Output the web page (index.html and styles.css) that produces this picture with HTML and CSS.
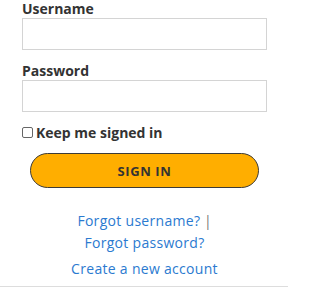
FILE: index.html
```html
<!DOCTYPE html>
<html>
<head>
<meta charset="utf-8">
<link rel="stylesheet" href="styles.css">
</head>
<body>
<form class="login">
  <label class="label" for="u">Username</label>
  <input class="field" id="u" type="text">
  <label class="label second" for="p">Password</label>
  <input class="field" id="p" type="password">
  <label class="remember"><span class="box"></span>Keep me signed in</label>
  <button class="signin" type="button">SIGN IN</button>
  <div class="links">
    <p class="line"><a href="#">Forgot username?</a> <span class="sep">|</span></p>
    <p class="line"><a href="#">Forgot password?</a></p>
    <p class="line create"><a href="#">Create a new account</a></p>
  </div>
</form>
</body>
</html>
```
FILE: styles.css
```css
html, body {
  margin: 0;
  padding: 0;
  background: #fff;
}
body {
  font-family: "Open Sans", "Liberation Sans", sans-serif;
  color: #333;
  width: 288px;
  height: 288px;
  overflow: hidden;
}
.login {
  display: flex;
  flex-direction: column;
  width: 288px;
  padding: 0 21px 0 22px;
  border-bottom: 1px solid #ddd;
  height: 287px;
  box-sizing: border-box;
}
.label {
  font-weight: 700;
  font-size: 14px;
  line-height: 17px;
  color: #333;
}
.label.second {
  margin-top: 12px;
}
.field {
  margin: 1px 0 0;
  height: 32px;
  width: 100%;
  box-sizing: border-box;
  border: 1px solid #d4d4d4;
  border-radius: 0;
  background: #fff;
  padding: 0 8px;
  font-size: 14px;
}
.remember {
  display: flex;
  align-items: center;
  gap: 3px;
  margin-top: 12px;
  font-weight: 700;
  font-size: 14px;
  line-height: 17px;
  color: #333;
}
.box {
  width: 9px;
  height: 9px;
  border: 1px solid #666;
  border-radius: 2px;
  background: #fff;
}
.signin {
  margin: 12px 8px 0 8px;
  height: 35px;
  border: 1.5px solid #3d3b37;
  border-radius: 18px;
  background: #ffae00;
  color: #333;
  font-family: "Open Sans", "Liberation Sans", sans-serif;
  font-weight: 700;
  font-size: 13px;
  letter-spacing: 0.6px;
}
.links {
  margin-top: 22px;
  text-align: center;
  font-size: 14px;
}
.line {
  margin: 0;
  line-height: 22px;
}
.line.create {
  margin-top: 4px;
}
.links a {
  color: #2b7ad0;
  text-decoration: none;
  letter-spacing: 0.3px;
}
.sep {
  color: #777;
}
```
